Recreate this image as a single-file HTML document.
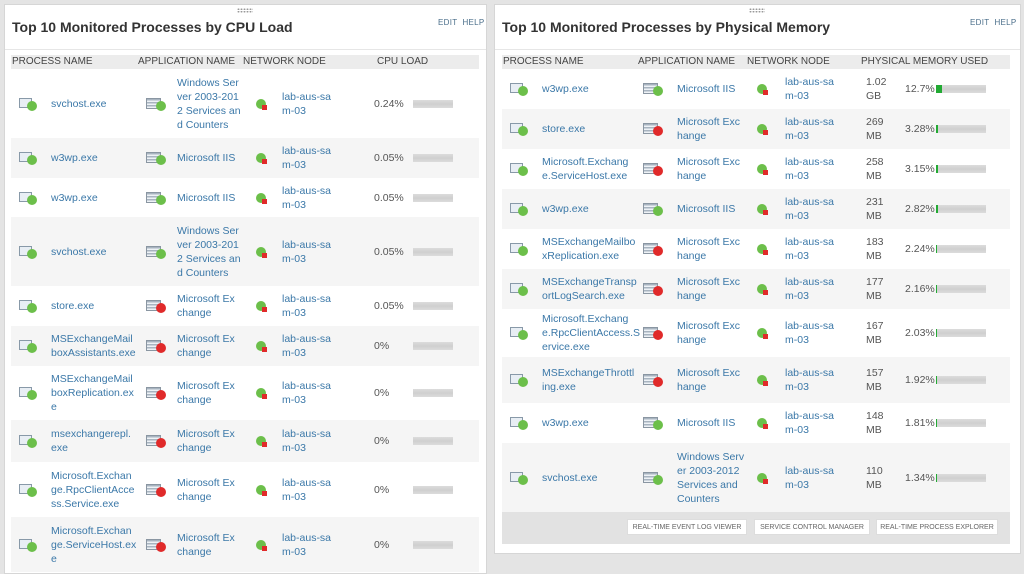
<!DOCTYPE html>
<html><head><meta charset="utf-8"><style>
*{box-sizing:border-box;margin:0;padding:0}
body{width:1024px;height:560px;overflow:hidden;background:#e4e4e4;font-family:"Liberation Sans",sans-serif;font-size:10.5px;color:#555;position:relative}
.panel{position:absolute;background:#fff;border:1px solid #d6d6d6}
.grip{position:absolute;top:3px;width:16px;height:5px;background:radial-gradient(circle,#999 0.8px,transparent 1px) 0 0/3px 2.5px}
.title{position:absolute;left:7px;top:14px;font-size:14px;font-weight:bold;color:#333;white-space:nowrap}
.eh{position:absolute;top:13px;font-size:8px;color:#4a6e8a;letter-spacing:.3px;white-space:nowrap}
.sep{position:absolute;left:0;right:0;top:44px;border-top:1px solid #e6e6e6}
.hdr{position:absolute;top:50px;height:14px;background:#ececec;font-size:10px;color:#444}
.hdr span{position:absolute;top:1px;white-space:nowrap}
.tb{position:absolute;top:64px}
.row{position:relative}
.row.alt{background:#f5f5f5}
.c{position:absolute;top:0;bottom:0;display:flex;align-items:center;line-height:14px;white-space:nowrap}
a{color:#3b78a8;text-decoration:none}
.bar{height:8px;background:linear-gradient(#dcdcdc,#cfcfcf,#dcdcdc);position:relative}
.bar i{position:absolute;left:0;top:0;bottom:0;background:#22aa33}
.pic{position:relative;width:20px;height:14px}
.pic:before{content:"";position:absolute;left:0;top:1px;width:11px;height:8px;border:1.5px solid #8899a8;background:#e8eef4}
.pic:after{content:"";position:absolute;left:8px;top:4px;width:10px;height:10px;border-radius:50%;background:#6cbf4a}
.aic{position:relative;width:22px;height:14px}
.aic:before{content:"";position:absolute;left:0;top:1px;width:13px;height:9px;background:repeating-linear-gradient(#a8b4c0 0 1.5px,#eef2f6 1.5px 3px);border:1px solid #8a96a2}
.aic b{position:absolute;left:10px;top:4px;width:10px;height:10px;border-radius:50%;background:#6cbf4a}
.aic.r b{background:#e02a2a}
.nic{position:relative;width:12px;height:12px}
.nic:before{content:"";position:absolute;left:0;top:1px;width:10px;height:10px;border-radius:50%;background:#6cbf4a}
.nic:after{content:"";position:absolute;left:6px;top:7px;width:5px;height:5px;background:#e02a2a}
.btn{position:absolute;top:7px;height:16px;background:#fff;border:1px solid #ddd;font-size:7px;color:#666;display:flex;align-items:center;justify-content:center;white-space:nowrap}
</style></head><body>

<div class="panel" style="left:4px;top:4px;width:483px;height:570px">
<div class="grip" style="left:232px"></div>
<div class="title">Top 10 Monitored Processes by CPU Load</div>
<div class="eh" style="left:433px">EDIT&nbsp; HELP</div>
<div class="sep"></div>
<div class="hdr" style="left:6px;width:468px"><span style="left:1px">PROCESS NAME</span><span style="left:127px">APPLICATION NAME</span><span style="left:232px">NETWORK NODE</span><span style="left:366px">CPU LOAD</span></div>
<div class="tb" style="left:6px;width:468px">
<div class="row" style="height:69px"><div class="c" style="left:8px"><div class="pic"></div></div><div class="c" style="left:40px"><a>svchost.exe</a></div><div class="c" style="left:135px"><div class="aic"><b></b></div></div><div class="c" style="left:166px;width:70px"><a>Windows Ser<br>ver 2003-201<br>2 Services an<br>d Counters</a></div><div class="c" style="left:245px"><div class="nic"></div></div><div class="c" style="left:271px"><a>lab-aus-sa<br>m-03</a></div><div class="c" style="left:363px">0.24%</div><div class="c" style="left:402px"><div class="bar" style="width:40px"></div></div></div>
<div class="row alt" style="height:40px"><div class="c" style="left:8px"><div class="pic"></div></div><div class="c" style="left:40px"><a>w3wp.exe</a></div><div class="c" style="left:135px"><div class="aic"><b></b></div></div><div class="c" style="left:166px"><a>Microsoft IIS</a></div><div class="c" style="left:245px"><div class="nic"></div></div><div class="c" style="left:271px"><a>lab-aus-sa<br>m-03</a></div><div class="c" style="left:363px">0.05%</div><div class="c" style="left:402px"><div class="bar" style="width:40px"></div></div></div>
<div class="row" style="height:39px"><div class="c" style="left:8px"><div class="pic"></div></div><div class="c" style="left:40px"><a>w3wp.exe</a></div><div class="c" style="left:135px"><div class="aic"><b></b></div></div><div class="c" style="left:166px"><a>Microsoft IIS</a></div><div class="c" style="left:245px"><div class="nic"></div></div><div class="c" style="left:271px"><a>lab-aus-sa<br>m-03</a></div><div class="c" style="left:363px">0.05%</div><div class="c" style="left:402px"><div class="bar" style="width:40px"></div></div></div>
<div class="row alt" style="height:69px"><div class="c" style="left:8px"><div class="pic"></div></div><div class="c" style="left:40px"><a>svchost.exe</a></div><div class="c" style="left:135px"><div class="aic"><b></b></div></div><div class="c" style="left:166px"><a>Windows Ser<br>ver 2003-201<br>2 Services an<br>d Counters</a></div><div class="c" style="left:245px"><div class="nic"></div></div><div class="c" style="left:271px"><a>lab-aus-sa<br>m-03</a></div><div class="c" style="left:363px">0.05%</div><div class="c" style="left:402px"><div class="bar" style="width:40px"></div></div></div>
<div class="row" style="height:40px"><div class="c" style="left:8px"><div class="pic"></div></div><div class="c" style="left:40px"><a>store.exe</a></div><div class="c" style="left:135px"><div class="aic r"><b></b></div></div><div class="c" style="left:166px"><a>Microsoft Ex<br>change</a></div><div class="c" style="left:245px"><div class="nic"></div></div><div class="c" style="left:271px"><a>lab-aus-sa<br>m-03</a></div><div class="c" style="left:363px">0.05%</div><div class="c" style="left:402px"><div class="bar" style="width:40px"></div></div></div>
<div class="row alt" style="height:40px"><div class="c" style="left:8px"><div class="pic"></div></div><div class="c" style="left:40px"><a>MSExchangeMail<br>boxAssistants.exe</a></div><div class="c" style="left:135px"><div class="aic r"><b></b></div></div><div class="c" style="left:166px"><a>Microsoft Ex<br>change</a></div><div class="c" style="left:245px"><div class="nic"></div></div><div class="c" style="left:271px"><a>lab-aus-sa<br>m-03</a></div><div class="c" style="left:363px">0%</div><div class="c" style="left:402px"><div class="bar" style="width:40px"></div></div></div>
<div class="row" style="height:54px"><div class="c" style="left:8px"><div class="pic"></div></div><div class="c" style="left:40px"><a>MSExchangeMail<br>boxReplication.ex<br>e</a></div><div class="c" style="left:135px"><div class="aic r"><b></b></div></div><div class="c" style="left:166px"><a>Microsoft Ex<br>change</a></div><div class="c" style="left:245px"><div class="nic"></div></div><div class="c" style="left:271px"><a>lab-aus-sa<br>m-03</a></div><div class="c" style="left:363px">0%</div><div class="c" style="left:402px"><div class="bar" style="width:40px"></div></div></div>
<div class="row alt" style="height:42px"><div class="c" style="left:8px"><div class="pic"></div></div><div class="c" style="left:40px"><a>msexchangerepl.<br>exe</a></div><div class="c" style="left:135px"><div class="aic r"><b></b></div></div><div class="c" style="left:166px"><a>Microsoft Ex<br>change</a></div><div class="c" style="left:245px"><div class="nic"></div></div><div class="c" style="left:271px"><a>lab-aus-sa<br>m-03</a></div><div class="c" style="left:363px">0%</div><div class="c" style="left:402px"><div class="bar" style="width:40px"></div></div></div>
<div class="row" style="height:55px"><div class="c" style="left:8px"><div class="pic"></div></div><div class="c" style="left:40px"><a>Microsoft.Exchan<br>ge.RpcClientAcce<br>ss.Service.exe</a></div><div class="c" style="left:135px"><div class="aic r"><b></b></div></div><div class="c" style="left:166px"><a>Microsoft Ex<br>change</a></div><div class="c" style="left:245px"><div class="nic"></div></div><div class="c" style="left:271px"><a>lab-aus-sa<br>m-03</a></div><div class="c" style="left:363px">0%</div><div class="c" style="left:402px"><div class="bar" style="width:40px"></div></div></div>
<div class="row alt" style="height:55px"><div class="c" style="left:8px"><div class="pic"></div></div><div class="c" style="left:40px"><a>Microsoft.Exchan<br>ge.ServiceHost.ex<br>e</a></div><div class="c" style="left:135px"><div class="aic r"><b></b></div></div><div class="c" style="left:166px"><a>Microsoft Ex<br>change</a></div><div class="c" style="left:245px"><div class="nic"></div></div><div class="c" style="left:271px"><a>lab-aus-sa<br>m-03</a></div><div class="c" style="left:363px">0%</div><div class="c" style="left:402px"><div class="bar" style="width:40px"></div></div></div>
</div>
</div>

<div class="panel" style="left:494px;top:4px;width:527px;height:550px">
<div class="grip" style="left:254px"></div>
<div class="title">Top 10 Monitored Processes by Physical Memory</div>
<div class="eh" style="left:475px">EDIT&nbsp; HELP</div>
<div class="sep"></div>
<div class="hdr" style="left:7px;width:508px"><span style="left:1px">PROCESS NAME</span><span style="left:136px">APPLICATION NAME</span><span style="left:245px">NETWORK NODE</span><span style="left:359px">PHYSICAL MEMORY USED</span></div>
<div class="tb" style="left:7px;width:508px">
<div class="row" style="height:40px"><div class="c" style="left:8px"><div class="pic"></div></div><div class="c" style="left:40px"><a>w3wp.exe</a></div><div class="c" style="left:141px"><div class="aic"><b></b></div></div><div class="c" style="left:175px"><a>Microsoft IIS</a></div><div class="c" style="left:255px"><div class="nic"></div></div><div class="c" style="left:283px"><a>lab-aus-sa<br>m-03</a></div><div class="c" style="left:364px">1.02<br>GB</div><div class="c" style="left:403px">12.7%</div><div class="c" style="left:434px"><div class="bar" style="width:50px"><i style="width:6px"></i></div></div></div>
<div class="row alt" style="height:40px"><div class="c" style="left:8px"><div class="pic"></div></div><div class="c" style="left:40px"><a>store.exe</a></div><div class="c" style="left:141px"><div class="aic r"><b></b></div></div><div class="c" style="left:175px"><a>Microsoft Exc<br>hange</a></div><div class="c" style="left:255px"><div class="nic"></div></div><div class="c" style="left:283px"><a>lab-aus-sa<br>m-03</a></div><div class="c" style="left:364px">269<br>MB</div><div class="c" style="left:403px">3.28%</div><div class="c" style="left:434px"><div class="bar" style="width:50px"><i style="width:2px"></i></div></div></div>
<div class="row" style="height:40px"><div class="c" style="left:8px"><div class="pic"></div></div><div class="c" style="left:40px"><a>Microsoft.Exchang<br>e.ServiceHost.exe</a></div><div class="c" style="left:141px"><div class="aic r"><b></b></div></div><div class="c" style="left:175px"><a>Microsoft Exc<br>hange</a></div><div class="c" style="left:255px"><div class="nic"></div></div><div class="c" style="left:283px"><a>lab-aus-sa<br>m-03</a></div><div class="c" style="left:364px">258<br>MB</div><div class="c" style="left:403px">3.15%</div><div class="c" style="left:434px"><div class="bar" style="width:50px"><i style="width:2px"></i></div></div></div>
<div class="row alt" style="height:40px"><div class="c" style="left:8px"><div class="pic"></div></div><div class="c" style="left:40px"><a>w3wp.exe</a></div><div class="c" style="left:141px"><div class="aic"><b></b></div></div><div class="c" style="left:175px"><a>Microsoft IIS</a></div><div class="c" style="left:255px"><div class="nic"></div></div><div class="c" style="left:283px"><a>lab-aus-sa<br>m-03</a></div><div class="c" style="left:364px">231<br>MB</div><div class="c" style="left:403px">2.82%</div><div class="c" style="left:434px"><div class="bar" style="width:50px"><i style="width:2px"></i></div></div></div>
<div class="row" style="height:40px"><div class="c" style="left:8px"><div class="pic"></div></div><div class="c" style="left:40px"><a>MSExchangeMailbo<br>xReplication.exe</a></div><div class="c" style="left:141px"><div class="aic r"><b></b></div></div><div class="c" style="left:175px"><a>Microsoft Exc<br>hange</a></div><div class="c" style="left:255px"><div class="nic"></div></div><div class="c" style="left:283px"><a>lab-aus-sa<br>m-03</a></div><div class="c" style="left:364px">183<br>MB</div><div class="c" style="left:403px">2.24%</div><div class="c" style="left:434px"><div class="bar" style="width:50px"><i style="width:1px"></i></div></div></div>
<div class="row alt" style="height:40px"><div class="c" style="left:8px"><div class="pic"></div></div><div class="c" style="left:40px"><a>MSExchangeTransp<br>ortLogSearch.exe</a></div><div class="c" style="left:141px"><div class="aic r"><b></b></div></div><div class="c" style="left:175px"><a>Microsoft Exc<br>hange</a></div><div class="c" style="left:255px"><div class="nic"></div></div><div class="c" style="left:283px"><a>lab-aus-sa<br>m-03</a></div><div class="c" style="left:364px">177<br>MB</div><div class="c" style="left:403px">2.16%</div><div class="c" style="left:434px"><div class="bar" style="width:50px"><i style="width:1px"></i></div></div></div>
<div class="row" style="height:48px"><div class="c" style="left:8px"><div class="pic"></div></div><div class="c" style="left:40px"><a>Microsoft.Exchang<br>e.RpcClientAccess.S<br>ervice.exe</a></div><div class="c" style="left:141px"><div class="aic r"><b></b></div></div><div class="c" style="left:175px"><a>Microsoft Exc<br>hange</a></div><div class="c" style="left:255px"><div class="nic"></div></div><div class="c" style="left:283px"><a>lab-aus-sa<br>m-03</a></div><div class="c" style="left:364px">167<br>MB</div><div class="c" style="left:403px">2.03%</div><div class="c" style="left:434px"><div class="bar" style="width:50px"><i style="width:1px"></i></div></div></div>
<div class="row alt" style="height:46px"><div class="c" style="left:8px"><div class="pic"></div></div><div class="c" style="left:40px"><a>MSExchangeThrottl<br>ing.exe</a></div><div class="c" style="left:141px"><div class="aic r"><b></b></div></div><div class="c" style="left:175px"><a>Microsoft Exc<br>hange</a></div><div class="c" style="left:255px"><div class="nic"></div></div><div class="c" style="left:283px"><a>lab-aus-sa<br>m-03</a></div><div class="c" style="left:364px">157<br>MB</div><div class="c" style="left:403px">1.92%</div><div class="c" style="left:434px"><div class="bar" style="width:50px"><i style="width:1px"></i></div></div></div>
<div class="row" style="height:40px"><div class="c" style="left:8px"><div class="pic"></div></div><div class="c" style="left:40px"><a>w3wp.exe</a></div><div class="c" style="left:141px"><div class="aic"><b></b></div></div><div class="c" style="left:175px"><a>Microsoft IIS</a></div><div class="c" style="left:255px"><div class="nic"></div></div><div class="c" style="left:283px"><a>lab-aus-sa<br>m-03</a></div><div class="c" style="left:364px">148<br>MB</div><div class="c" style="left:403px">1.81%</div><div class="c" style="left:434px"><div class="bar" style="width:50px"><i style="width:1px"></i></div></div></div>
<div class="row alt" style="height:69px"><div class="c" style="left:8px"><div class="pic"></div></div><div class="c" style="left:40px"><a>svchost.exe</a></div><div class="c" style="left:141px"><div class="aic"><b></b></div></div><div class="c" style="left:175px"><a>Windows Serv<br>er 2003-2012<br>Services and<br>Counters</a></div><div class="c" style="left:255px"><div class="nic"></div></div><div class="c" style="left:283px"><a>lab-aus-sa<br>m-03</a></div><div class="c" style="left:364px">110<br>MB</div><div class="c" style="left:403px">1.34%</div><div class="c" style="left:434px"><div class="bar" style="width:50px"><i style="width:1px"></i></div></div></div>
<div class="row" style="height:32px;background:#e2e2e2">
<div class="btn" style="left:125px;width:120px">REAL-TIME EVENT LOG VIEWER</div>
<div class="btn" style="left:252px;width:116px">SERVICE CONTROL MANAGER</div>
<div class="btn" style="left:374px;width:122px">REAL-TIME PROCESS EXPLORER</div>
</div>
</div>
</div>
</body></html>
